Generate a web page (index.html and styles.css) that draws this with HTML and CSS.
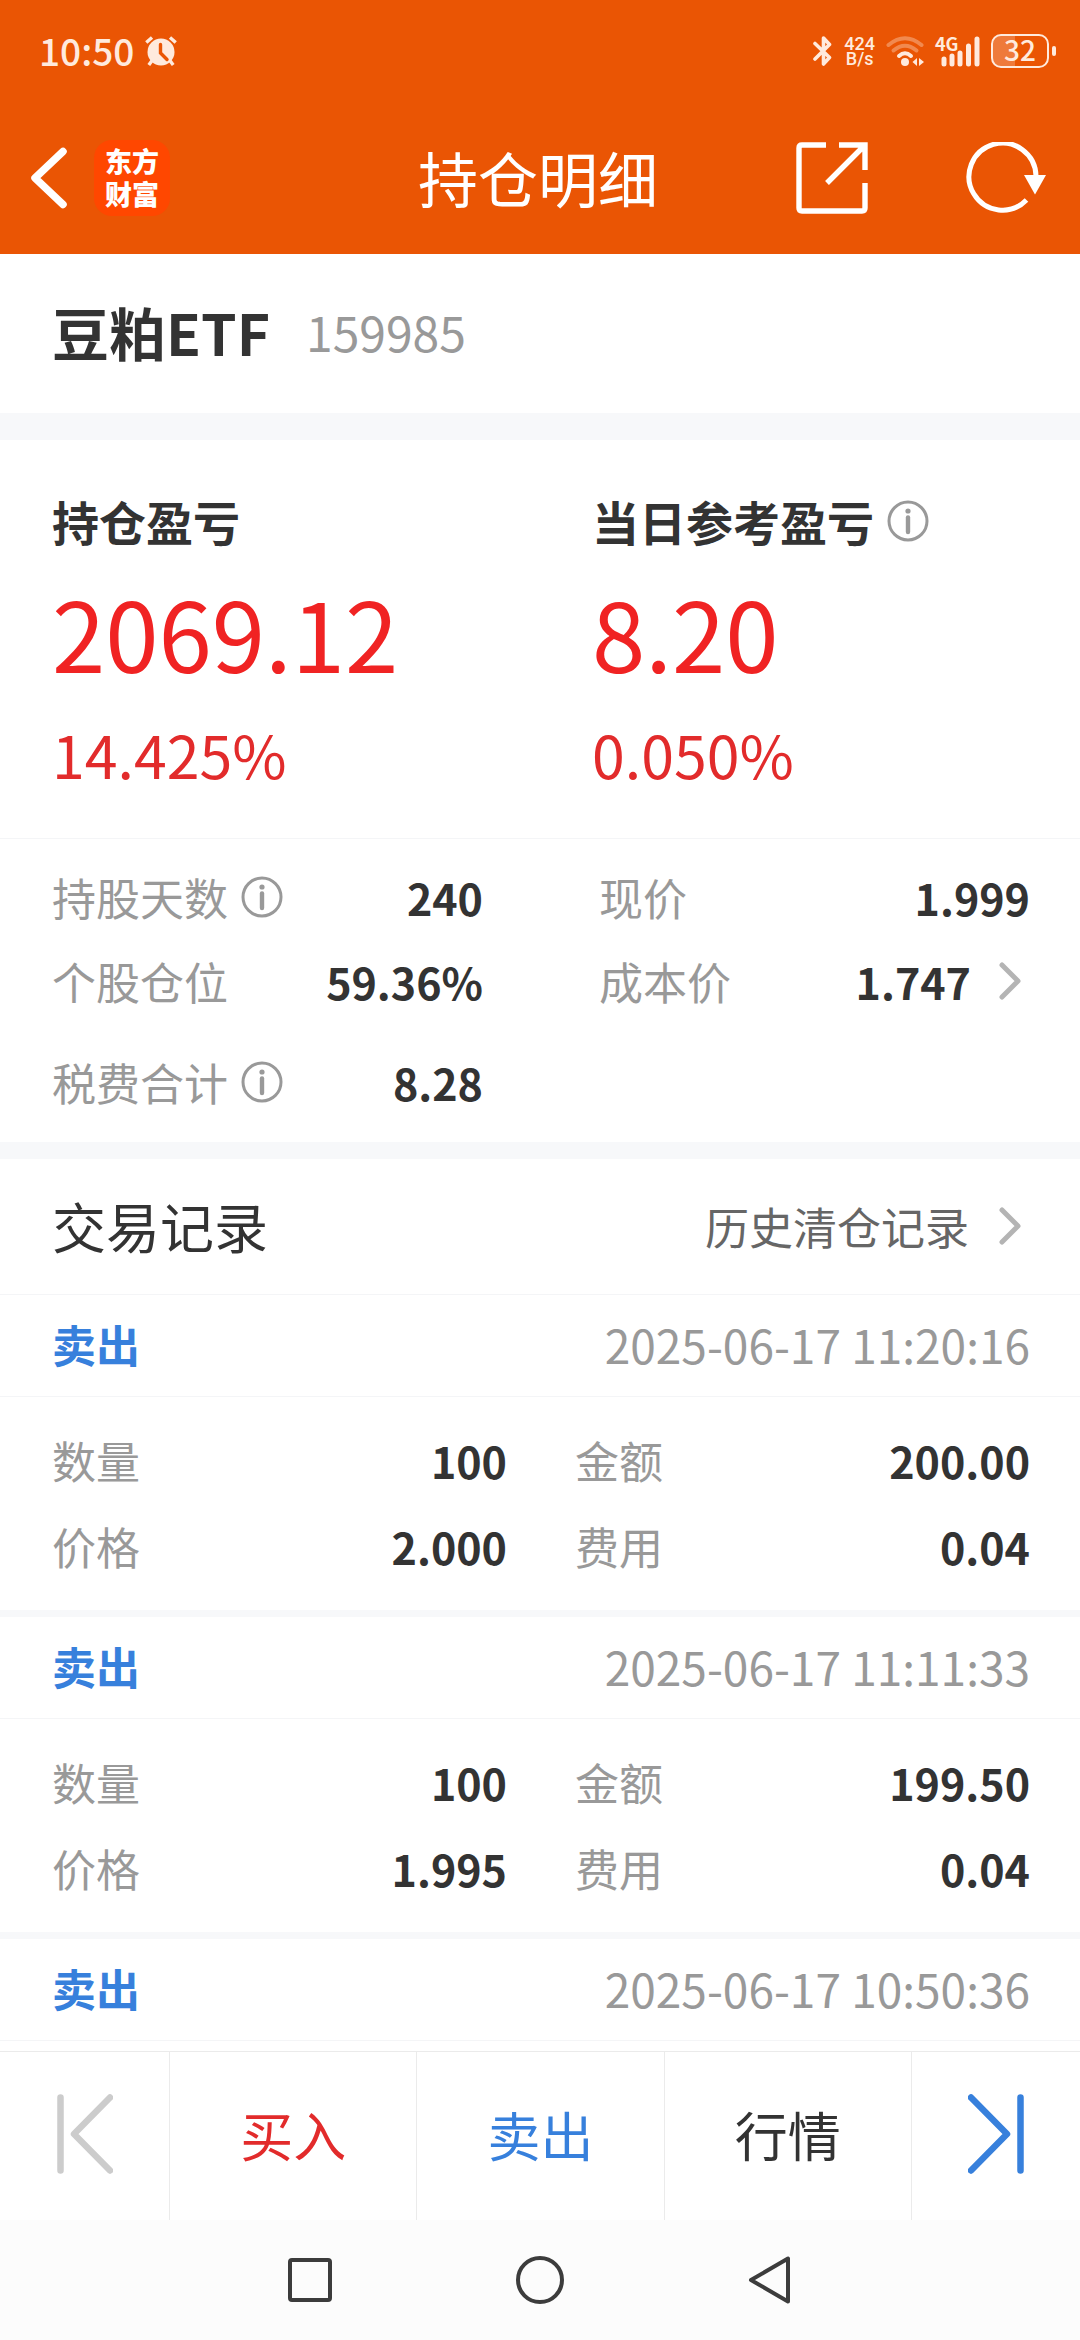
FILE: index.html
```html
<!DOCTYPE html>
<html lang="zh-CN">
<head>
<meta charset="utf-8">
<meta name="viewport" content="width=device-width">
<title>持仓明细</title>
<link rel="stylesheet" href="styles.css">
</head>
<body>
<svg class="defs" aria-hidden="true">
  <symbol id="info" viewBox="0 0 42 42">
    <circle cx="21" cy="21" r="19" fill="none" stroke="currentColor" stroke-width="3"/>
    <circle cx="21" cy="11" r="2.6" fill="currentColor"/>
    <path d="M21 17.500V32" stroke="currentColor" stroke-width="4.400" stroke-linecap="round"/>
  </symbol>
  <symbol id="chevron" viewBox="0 0 22 38">
    <path d="M3 3L19 19L3 35" fill="none" stroke="currentColor" stroke-width="5" stroke-linecap="round" stroke-linejoin="round"/>
  </symbol>
</svg>

<header class="top">
  <div class="status">
    <div class="status-group">
      <span class="clock">10:50</span>
      <svg class="alarm" viewBox="0 0 32 30" width="32" height="30" aria-label="闹钟">
        <g fill="none" stroke="currentColor" stroke-width="3.400">
          <path d="M1.300 6.500L7 1.500M25 1.500L30.700 6.500"/>
          <path d="M7.500 24L3.800 29M24.500 24L28.200 29"/>
        </g>
        <circle cx="16" cy="16" r="13.500" fill="currentColor"/>
        <path d="M15.500 8.500V17L22 23.500" fill="none" stroke="#ea5504" stroke-width="3.400" stroke-linecap="round"/>
      </svg>
    </div>
    <div class="status-group">
      <svg viewBox="0 0 20 30" width="20" height="30" aria-label="蓝牙">
        <path d="M2 7.500L16.500 21.500L10.500 28V2L16.500 8.500L2 23" fill="none" stroke="currentColor" stroke-width="3.600" stroke-linecap="round" stroke-linejoin="round"/>
      </svg>
      <span class="speed"><span>424</span><span>B/s</span></span>
      <svg viewBox="0 0 38 30" width="38" height="30" aria-label="无线网络">
        <g fill="none" stroke="currentColor" stroke-width="4" stroke-linecap="round">
          <path d="M2.500 9Q19 -4.500 35.500 9" opacity=".35"/>
          <path d="M7.500 14.500Q19 5 30.500 14.500" opacity=".35"/>
          <path d="M13 20Q19 14.500 25 20"/>
        </g>
        <circle cx="19" cy="26" r="4" fill="currentColor"/>
        <path d="M31 22V30L26.500 26ZM33 22V30L38 26Z" fill="currentColor"/>
      </svg>
      <svg class="signal" viewBox="0 0 45 30" width="45" height="30" aria-label="4G 信号">
        <text class="net" x="0" y="15">4G</text>
        <path d="M9 23V28M17 20V28M25 17V28M33.500 10V28M42 3V28" stroke="currentColor" stroke-width="5" stroke-linecap="round"/>
      </svg>
      <div class="battery"><span class="cell">32</span></div>
    </div>
  </div>

  <div class="appbar">
    <div class="appbar-side">
      <button class="icon-btn" aria-label="返回">
        <svg viewBox="0 0 37 62" width="37" height="62"><path d="M33 4.500L5 31L33 57.500" fill="none" stroke="currentColor" stroke-width="7.500" stroke-linecap="round" stroke-linejoin="round"/></svg>
      </button>
      <a class="brand" href="#">东方<br>财富</a>
    </div>
    <h1 class="page-title">持仓明细</h1>
    <div class="appbar-side appbar-actions">
      <button class="icon-btn" aria-label="分享">
        <svg viewBox="0 0 72 72" width="72" height="72">
          <g fill="none" stroke="currentColor" stroke-width="5.400">
            <path d="M30 3H6Q3 3 3 6V66Q3 69 6 69H66Q69 69 69 66V41"/>
            <path d="M43 3H69V28M68 4L31 41"/>
          </g>
        </svg>
      </button>
      <button class="icon-btn" aria-label="刷新">
        <svg viewBox="0 0 80 72" width="80" height="72">
          <path d="M60.500 58A33.500 33.500 0 1 1 70 34" fill="none" stroke="currentColor" stroke-width="5"/>
          <path d="M58 33H80L69 52.500Z" fill="currentColor"/>
        </svg>
      </button>
    </div>
  </div>
</header>

<main class="content">
  <section class="stock">
    <h2 class="stock-name">豆粕ETF</h2>
    <span class="stock-code">159985</span>
  </section>

  <section class="profit">
    <div>
      <h3 class="profit-label">持仓盈亏</h3>
      <p class="profit-value">2069.12</p>
      <p class="profit-rate">14.425%</p>
    </div>
    <div>
      <h3 class="profit-label">当日参考盈亏<svg class="info"><use href="#info"/></svg></h3>
      <p class="profit-value">8.20</p>
      <p class="profit-rate">0.050%</p>
    </div>
  </section>

  <section class="details">
    <dl class="pairs">
      <div class="pair"><dt>持股天数<svg class="info"><use href="#info"/></svg></dt><dd>240</dd></div>
      <div class="pair"><dt>现价</dt><dd>1.999</dd></div>
      <div class="pair"><dt>个股仓位</dt><dd>59.36%</dd></div>
      <div class="pair"><dt>成本价</dt><dd><a class="more" href="#">1.747<svg class="chevron"><use href="#chevron"/></svg></a></dd></div>
    </dl>
    <dl class="pairs">
      <div class="pair"><dt>税费合计<svg class="info"><use href="#info"/></svg></dt><dd>8.28</dd></div>
    </dl>
  </section>

  <section class="trades">
    <div class="trades-head">
      <h2 class="trades-title">交易记录</h2>
      <a class="more history" href="#">历史清仓记录<svg class="chevron"><use href="#chevron"/></svg></a>
    </div>

    <article class="record">
      <div class="record-head"><h3 class="side">卖出</h3><time class="time">2025-06-17 11:20:16</time></div>
      <dl class="record-body">
        <div class="pair"><dt>数量</dt><dd>100</dd></div>
        <div class="pair"><dt>金额</dt><dd>200.00</dd></div>
        <div class="pair"><dt>价格</dt><dd>2.000</dd></div>
        <div class="pair"><dt>费用</dt><dd>0.04</dd></div>
      </dl>
    </article>

    <article class="record">
      <div class="record-head"><h3 class="side">卖出</h3><time class="time">2025-06-17 11:11:33</time></div>
      <dl class="record-body">
        <div class="pair"><dt>数量</dt><dd>100</dd></div>
        <div class="pair"><dt>金额</dt><dd>199.50</dd></div>
        <div class="pair"><dt>价格</dt><dd>1.995</dd></div>
        <div class="pair"><dt>费用</dt><dd>0.04</dd></div>
      </dl>
    </article>

    <article class="record">
      <div class="record-head"><h3 class="side">卖出</h3><time class="time">2025-06-17 10:50:36</time></div>
    </article>
  </section>
</main>

<nav class="tabs">
  <button class="tab tab-step tab-off" aria-label="上一个">
    <svg viewBox="0 0 56 80" width="56" height="80"><path d="M3.500 3.500V76.500M53 3.500L17 40L53 76.500" fill="none" stroke="currentColor" stroke-width="6.500" stroke-linecap="round" stroke-linejoin="round"/></svg>
  </button>
  <button class="tab tab-buy">买入</button>
  <button class="tab tab-sell">卖出</button>
  <button class="tab">行情</button>
  <button class="tab tab-step tab-sell" aria-label="下一个">
    <svg viewBox="0 0 56 80" width="56" height="80"><path d="M52.500 3.500V76.500M3 3.500L39 40L3 76.500" fill="none" stroke="currentColor" stroke-width="6.500" stroke-linecap="round" stroke-linejoin="round"/></svg>
  </button>
</nav>

<nav class="system">
  <button class="icon-btn" aria-label="最近任务">
    <svg viewBox="0 0 48 48" width="48" height="48"><rect x="4" y="4" width="40" height="40" rx="2" fill="none" stroke="currentColor" stroke-width="4"/></svg>
  </button>
  <button class="icon-btn" aria-label="主屏幕">
    <svg viewBox="0 0 48 48" width="48" height="48"><circle cx="24" cy="24" r="22" fill="none" stroke="currentColor" stroke-width="4"/></svg>
  </button>
  <button class="icon-btn" aria-label="返回">
    <svg viewBox="0 0 48 48" width="48" height="48"><path d="M42 2.500V45.500L5 24Z" fill="none" stroke="currentColor" stroke-width="4" stroke-linejoin="round"/></svg>
  </button>
</nav>
</body>
</html>
```

FILE: styles.css
```css
* {
  box-sizing: border-box;
  margin: 0;
  padding: 0;
}

body {
  display: flex;
  flex-direction: column;
  height: 100vh;
  background: #fff;
  color: #333;
  font-family: "Noto Sans CJK SC", "Noto Sans", sans-serif;
  font-size: 44px;
  line-height: 60px;
}

button {
  border: 0;
  background: none;
  color: inherit;
  font: inherit;
}

a {
  color: inherit;
  text-decoration: none;
}

svg {
  display: block;
}

.defs {
  position: absolute;
  width: 0;
  height: 0;
}

.icon-btn {
  display: flex;
  align-items: center;
  justify-content: center;
}

/* Header */
.top {
  background: #ea5504;
  color: #fff;
}

.status {
  display: flex;
  align-items: center;
  justify-content: space-between;
  height: 102px;
  padding: 0 24px 0 39px;
  color: #ffeadd;
}

.status-group {
  display: flex;
  align-items: center;
  gap: 11px;
}

.clock {
  padding-bottom: 2px;
  font-size: 37px;
  font-weight: 500;
}

.speed {
  display: grid;
  font: 500 18px/15px Roboto, sans-serif;
  text-align: center;
}

.signal {
  overflow: visible;
}

.net {
  fill: currentColor;
  font-size: 18px;
  font-weight: 700;
}

.battery {
  display: flex;
  align-items: center;
  gap: 3px;
}

.battery::after {
  width: 4px;
  height: 10px;
  border-radius: 2px;
  background: currentColor;
  content: "";
}

.cell {
  width: 58px;
  height: 34px;
  border: 2px solid currentColor;
  border-radius: 10px;
  background: linear-gradient(90deg, rgba(255, 255, 255, .22) 40%, transparent 40%);
  font-size: 28px;
  font-weight: 500;
  line-height: 27px;
  text-align: center;
}

.appbar {
  display: grid;
  grid-template-columns: 1fr auto 1fr;
  align-items: center;
  height: 152px;
  padding: 0 34px 0 30px;
}

.appbar-side {
  display: flex;
  align-items: center;
  gap: 27px;
}

.appbar-actions {
  justify-content: flex-end;
  gap: 98px;
}

.brand {
  width: 76px;
  height: 76px;
  padding: 4px 0;
  border-radius: 18px;
  background: #ff4700;
  font-size: 27px;
  font-weight: 900;
  line-height: 33px;
  text-align: center;
}

.page-title {
  padding-bottom: 3px;
  font-size: 60px;
  font-weight: 400;
  line-height: 80px;
}

/* Scrolling content */
.content {
  flex: 1;
  min-height: 0;
  overflow: hidden;
}

.stock {
  display: flex;
  align-items: center;
  gap: 36px;
  padding: 37px 52px 42px;
  border-bottom: 27px solid #f7f8fa;
  line-height: 80px;
}

.stock-name {
  font-size: 57px;
  font-weight: 700;
}

.stock-code {
  color: #999;
  font-size: 48px;
}

.profit {
  display: grid;
  grid-template-columns: 1fr 1fr;
  padding: 51px 0 49px 52px;
}

.profit > div + div {
  padding-left: 26px;
}

.profit-label {
  display: flex;
  align-items: center;
  font-size: 47px;
  font-weight: 700;
}

.info {
  width: 42px;
  height: 42px;
  margin-left: 13px;
  color: #999;
}

.profit-value {
  margin: 26px 0 32px;
  color: #f02323;
  font-size: 96px;
  line-height: 110px;
}

.profit-rate {
  color: #e22b2b;
  font-size: 59px;
  line-height: 70px;
}

.details {
  display: grid;
  gap: 41px;
  padding: 28px 50px 30px 52px;
  border-top: 1px solid #f4f5f7;
  border-bottom: 17px solid #f7f8fa;
}

.pairs {
  display: grid;
  grid-template-columns: 1fr 1fr;
  gap: 24px 116px;
}

.pair {
  display: flex;
  justify-content: space-between;
}

dt {
  display: flex;
  align-items: center;
  color: #999;
}

dd {
  font-size: 43px;
  font-weight: 700;
}

.more {
  display: flex;
  align-items: center;
  gap: 28px;
  padding-right: 9px;
}

.chevron {
  width: 22px;
  height: 38px;
  color: #b4b4b4;
}

/* Trade records */
.trades-head {
  display: flex;
  align-items: center;
  justify-content: space-between;
  padding: 37px 50px 38px 52px;
  border-bottom: 1px solid #f4f5f7;
}

.trades-title {
  font-size: 54px;
  font-weight: 400;
}

.history {
  gap: 30px;
  color: #666;
}

.record + .record {
  border-top: 7px solid #f7f8fa;
}

.record-head {
  display: flex;
  justify-content: space-between;
  padding: 19px 50px 22px 52px;
  border-bottom: 1px solid #f4f5f7;
}

.side {
  color: #3780dc;
  font-size: 44px;
  font-weight: 700;
}

.time {
  color: #999;
  font-size: 46px;
}

.record-body {
  display: grid;
  grid-template-columns: 1fr 1fr;
  gap: 26px 68px;
  padding: 33px 50px 34px 52px;
}

/* Bottom bars */
.tabs {
  display: flex;
  border-top: 1px solid #ebebeb;
}

.tab {
  display: flex;
  flex: 1;
  align-items: center;
  justify-content: center;
  height: 168px;
  padding-bottom: 5px;
  font-size: 53px;
}

.tab + .tab {
  border-left: 1px solid #ebebeb;
}

.tab-step {
  flex: 0 0 169px;
}

.tab-off {
  color: #ccc;
}

.tab-buy {
  color: #e22b2b;
}

.tab-sell {
  color: #3780dc;
}

.system {
  display: grid;
  grid-template-columns: repeat(3, 1fr);
  height: 120px;
  padding: 0 18%;
  background: #fcfcfc;
  color: #3c3c3c;
}
```
